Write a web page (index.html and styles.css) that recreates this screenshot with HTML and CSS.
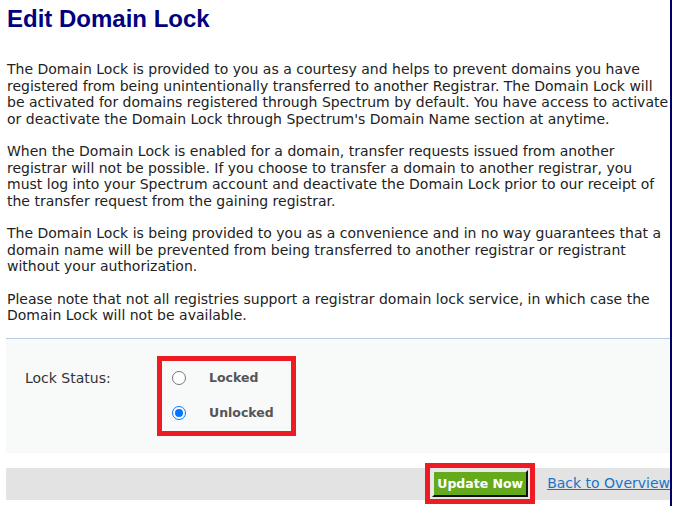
FILE: index.html
```html
<!DOCTYPE html>
<html>
<head>
<meta charset="utf-8">
<link rel="stylesheet" href="styles.css">
</head>
<body>
<div class="page">
  <h1 class="title">Edit Domain Lock</h1>
  <div class="intro">
    <p>The Domain Lock is provided to you as a courtesy and helps to prevent domains you have registered from being unintentionally transferred to another Registrar. The Domain Lock will be activated for domains registered through Spectrum by default. You have access to activate or deactivate the Domain Lock through Spectrum's Domain Name section at anytime.</p>
    <p>When the Domain Lock is enabled for a domain, transfer requests issued from another registrar will not be possible. If you choose to transfer a domain to another registrar, you must log into your Spectrum account and deactivate the Domain Lock prior to our receipt of the transfer request from the gaining registrar.</p>
    <p>The Domain Lock is being provided to you as a convenience and in no way guarantees that a domain name will be prevented from being transferred to another registrar or registrant without your authorization.</p>
    <p>Please note that not all registries support a registrar domain lock service, in which case the Domain Lock will not be available.</p>
  </div>
  <div class="panel">
    <div class="field-label">Lock Status:</div>
    <div class="options highlight">
      <label class="option"><span class="radio"></span><span class="opt-text">Locked</span></label>
      <label class="option"><span class="radio checked"></span><span class="opt-text">Unlocked</span></label>
    </div>
  </div>
  <div class="actions">
    <div class="btn-wrap highlight">
      <span class="btn">Update Now</span>
    </div>
    <a class="back" href="#">Back to Overview</a>
  </div>
</div>
</body>
</html>
```
FILE: styles.css
```css
html, body {
  margin: 0;
  padding: 0;
  background: #fff;
}
.page {
  width: 664px;
  height: 506px;
  padding-left: 6px;
  border-right: 2px solid #000066;
  overflow: hidden;
  font-family: "DejaVu Sans", Verdana, sans-serif;
  font-size: 14px;
  color: #222;
}
.title {
  margin: 0;
  padding: 5px 0 0 1px;
  font-family: "Liberation Sans", Arial, sans-serif;
  font-size: 24px;
  line-height: 28px;
  font-weight: bold;
  color: #000080;
}
.intro {
  padding: 28px 0 0 1px;
}
.intro p {
  margin: 0 0 16px 0;
  line-height: 16.5px;
}
.intro p:last-child {
  margin-bottom: 0;
}
.panel {
  margin-top: 14px;
  border-top: 1px solid #b9cce4;
  background: #f8f9f9;
  height: 115px;
  display: flex;
  align-items: flex-start;
  box-sizing: border-box;
  padding-top: 17px;
}
.field-label {
  width: 132px;
  padding-left: 19px;
  padding-top: 14px;
  line-height: 17px;
  color: #333;
}
.highlight {
  border: 5px solid #ed1c24;
}
.options {
  display: flex;
  flex-direction: column;
  padding: 7px 0 8px 10px;
  width: 119px;
  gap: 15px;
}
.option {
  display: flex;
  align-items: center;
  height: 20px;
}
.radio {
  width: 12px;
  height: 12px;
  border: 1px solid #767676;
  border-radius: 50%;
  background: #fff;
  box-sizing: content-box;
  margin-right: 23px;
  position: relative;
  flex: none;
}
.radio.checked {
  border: 1px solid #0075ff;
}
.radio.checked::after {
  content: "";
  position: absolute;
  left: 2px;
  top: 2px;
  width: 8px;
  height: 8px;
  border-radius: 50%;
  background: #0075ff;
}
.opt-text {
  font-weight: bold;
  font-size: 12.5px;
  color: #555;
}
.actions {
  margin-top: 15px;
  background: #e3e3e3;
  height: 32px;
  display: flex;
  align-items: flex-start;
  justify-content: flex-end;
}
.btn-wrap {
  margin-top: -5px;
  padding: 2px;
  background: #e8e8e8;
  display: flex;
}
.btn {
  display: inline-block;
  background: #64aa1a;
  color: #fff;
  font-weight: bold;
  font-size: 12.5px;
  line-height: 19px;
  padding: 2px 3px;
  border-top: 2px solid #e8e8e8;
  border-left: 2px solid #e8e8e8;
  border-right: 2px solid #111;
  border-bottom: 2px solid #111;
  white-space: nowrap;
}
.back {
  margin-left: 12px;
  margin-top: 7px;
  line-height: 17px;
  color: #1a73c9;
  text-decoration: underline;
  white-space: nowrap;
}
```
